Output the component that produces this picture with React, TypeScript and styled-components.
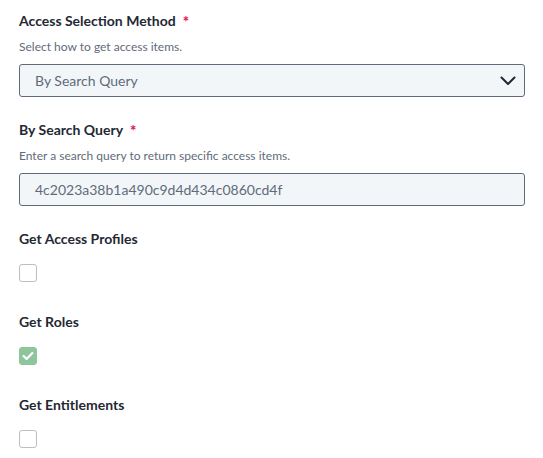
import React, { FC } from 'react'
import styled, { createGlobalStyle } from 'styled-components'

const GlobalStyle = createGlobalStyle`
  body {
    margin: 0;
    background: #ffffff;
    font-family: Lato, 'Liberation Sans', sans-serif;
  }
`

type TFieldProps = {
  label: string
  required?: boolean
  help?: string
  children: React.ReactNode
}

const Field: FC<TFieldProps> = (props: TFieldProps) => {
  return (
    <FieldBlock>
      <Label>
        {props.label}
        {props.required && <Star>*</Star>}
      </Label>
      {props.help && <Help>{props.help}</Help>}
      {props.children}
    </FieldBlock>
  )
}

const Check: FC<{ checked?: boolean }> = ({ checked }) => {
  return (
    <CheckBox checked={checked}>
      {checked && (
        <svg width="12" height="10" viewBox="0 0 12 10" fill="none">
          <path d="M1.6 5L4.6 7.9L10.4 2" stroke="#ffffff" strokeWidth="2.2" strokeLinecap="round" strokeLinejoin="round" />
        </svg>
      )}
    </CheckBox>
  )
}

export default function App() {
  return (
    <>
      <GlobalStyle />
      <Form>
        <Field label="Access Selection Method" required help="Select how to get access items.">
          <SelectBox>
            <span>By Search Query</span>
            <svg width="16" height="10" viewBox="0 0 16 10" fill="none">
              <path d="M1.5 1.5L8 8L14.5 1.5" stroke="#1f2933" strokeWidth="2" strokeLinecap="round" strokeLinejoin="round" />
            </svg>
          </SelectBox>
        </Field>
        <Field label="By Search Query" required help="Enter a search query to return specific access items.">
          <InputBox>4c2023a38b1a490c9d4d434c0860cd4f</InputBox>
        </Field>
        <Field label="Get Access Profiles">
          <Check />
        </Field>
        <Field label="Get Roles">
          <Check checked />
        </Field>
        <Field label="Get Entitlements">
          <Check />
        </Field>
      </Form>
    </>
  )
}

const Form = styled.div`
  display: flex;
  flex-direction: column;
  gap: 24px;
  padding: 12px 18px 0 19px;
`

const FieldBlock = styled.div`
  display: flex;
  flex-direction: column;
`

const Label = styled.div`
  font-size: 14px;
  font-weight: 700;
  color: #1f2933;
  line-height: 18px;
  display: flex;
  align-items: center;
`

const Star = styled.span`
  color: #e0185c;
  margin-left: 7px;
  font-size: 15px;
  font-weight: 900;
`

const Help = styled.div`
  font-size: 12px;
  color: #5f6b7a;
  line-height: 16px;
  margin-top: 9px;
`

const BoxBase = styled.div`
  box-sizing: border-box;
  height: 33px;
  margin-top: 9px;
  background: #f3f6f9;
  border: 1px solid #5f6b7a;
  border-radius: 3px;
  padding: 0 8px 0 15px;
  display: flex;
  align-items: center;
  font-size: 14px;
  color: #5f6b7a;
`

const SelectBox = styled(BoxBase)`
  justify-content: space-between;
`

const InputBox = styled(BoxBase)``

const CheckBox = styled.div<{ checked?: boolean }>`
  box-sizing: border-box;
  width: 18px;
  height: 18px;
  margin: 16px 0 7px;
  border-radius: 3px;
  border: 1px solid ${(p) => (p.checked ? '#8fc59a' : '#b9bec5')};
  background: ${(p) => (p.checked ? '#8fc59a' : '#ffffff')};
  display: flex;
  align-items: center;
  justify-content: center;
`
